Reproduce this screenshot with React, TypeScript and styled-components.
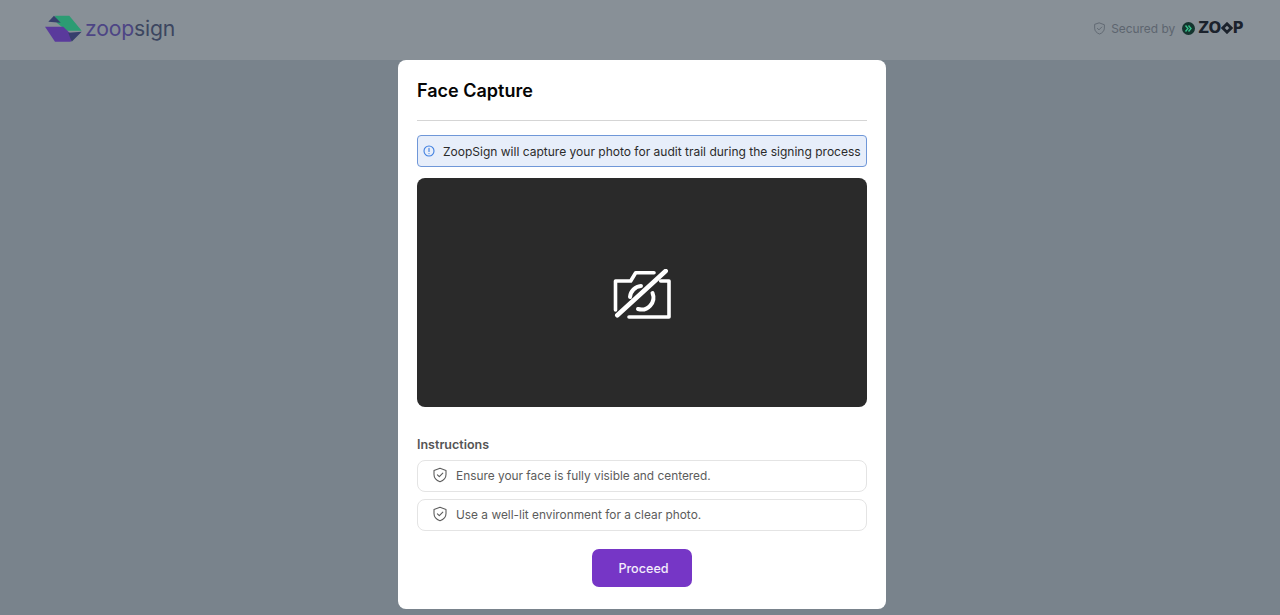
import styled, { createGlobalStyle } from "styled-components";

const GlobalStyle = createGlobalStyle`
  html, body {
    margin: 0;
    padding: 0;
    height: 100%;
  }
  body {
    font-family: Inter, "Noto Sans", sans-serif;
    overflow: hidden;
  }
`;

const Page = styled.div`
  width: 1280px;
  height: 615px;
  display: flex;
  flex-direction: column;
  background: #79838c;
`;

const Header = styled.header`
  height: 60px;
  flex: none;
  display: flex;
  align-items: center;
  justify-content: space-between;
  padding: 0 37px 4px 45px;
  box-sizing: border-box;
  background: #889097;
`;

const Logo = styled.div`
  display: flex;
  align-items: center;
  gap: 3px;
`;

const LogoWord = styled.span`
  font-size: 21.2px;
  line-height: 26px;
  letter-spacing: -0.2px;
  color: #4d4585;
`;

const LogoSign = styled.span`
  color: #3c4660;
`;

const Secured = styled.div`
  display: flex;
  align-items: center;
  gap: 5px;
  font-size: 11.9px;
  color: #5d656f;
`;

const ZoopMark = styled.div`
  display: flex;
  align-items: center;
  gap: 0;
  margin-left: 2px;
  font-family: "DejaVu Sans", sans-serif;
  font-weight: 700;
  font-size: 15px;
  letter-spacing: -0.6px;
  color: #1b222c;
`;

const ZoopBadgeSlot = styled.span`
  display: flex;
  margin-right: 3px;
`;

const Main = styled.main`
  flex: 1;
  display: flex;
  justify-content: center;
  align-items: flex-start;
  padding-left: 4px;
`;

const Card = styled.section`
  width: 488px;
  height: 549px;
  box-sizing: border-box;
  padding: 19px 19px 22px;
  display: flex;
  flex-direction: column;
  background: #fff;
  border-radius: 8px;
`;

const Title = styled.h1`
  margin: 0;
  height: 41px;
  border-bottom: 1px solid #d5d5d5;
  font-size: 18px;
  font-weight: 600;
  line-height: 24px;
  color: #050505;
`;

const InfoBox = styled.div`
  margin-top: 14px;
  height: 32px;
  box-sizing: border-box;
  display: flex;
  align-items: center;
  gap: 8px;
  padding-left: 5px;
  background: #e7eefa;
  border: 1px solid #6f97d8;
  border-radius: 4px;
  font-size: 12.03px;
  color: #2b2b2b;
  white-space: nowrap;
`;

const Camera = styled.div`
  margin-top: 11px;
  height: 229px;
  display: flex;
  align-items: center;
  justify-content: center;
  background: #2a2a2a;
  border-radius: 8px;
`;

const CameraIconSlot = styled.span`
  display: flex;
  margin-top: 2px;
`;

const SectionLabel = styled.h2`
  margin: 30px 0 0;
  font-size: 12.5px;
  font-weight: 600;
  line-height: 16px;
  color: #555;
`;

const RuleList = styled.div`
  margin-top: 7px;
  display: flex;
  flex-direction: column;
  gap: 7px;
`;

const Rule = styled.div`
  height: 32px;
  box-sizing: border-box;
  display: flex;
  align-items: center;
  gap: 8px;
  padding: 0 0 2px 14px;
  border: 1px solid #e4e4e4;
  border-radius: 8px;
  font-size: 11.88px;
  color: #5c5c5c;
`;

const ProceedButton = styled.button`
  align-self: center;
  margin-top: 18px;
  width: 100px;
  height: 38px;
  padding: 0 0 0 3px;
  border: 0;
  border-radius: 7px;
  background: #7636c6;
  color: #f3ecfb;
  font-family: inherit;
  font-size: 12.6px;
  font-weight: 500;
`;

const LogoIcon = () => (
  <svg width="37" height="27" viewBox="0 0 37 27">
    <path d="M10 0.7 H24.3 L36.7 15.7 H21.7 L11.7 7.7 Z" fill="#2c9c73" />
    <path d="M3.3 6.7 L9 0.7 L15.7 7.7 Z" fill="#363f6c" />
    <path d="M0 11.7 H18.3 L27.7 20.7 L25.7 26.7 H10 Z" fill="#5a3a9c" />
    <path d="M23.3 17.7 L36.7 16.7 L26.7 26.7 Z" fill="#363f6c" />
  </svg>
);

const ShieldCheck = ({ size, color }: { size: number; color: string }) => (
  <svg width={size} height={size} viewBox="0 0 16 16" fill="none" stroke={color} strokeWidth="1.1" strokeLinecap="round" strokeLinejoin="round">
    <path d="M8 1.2 L14 3.4 V7.6 C14 11 11.4 13.6 8 14.8 C4.6 13.6 2 11 2 7.6 V3.4 Z" />
    <path d="M5.4 7.8 L7.3 9.7 L10.8 6.2" />
  </svg>
);

const InfoIcon = () => (
  <svg width="12" height="12" viewBox="0 0 12 12" fill="none" stroke="#3f7fe0" strokeWidth="1.1" strokeLinecap="round">
    <circle cx="6" cy="6" r="5" />
    <path d="M6 3.2 V6.4 M6 8.5 V8.6" />
  </svg>
);

const CameraOff = () => (
  <svg width="58" height="50" viewBox="0 0 58 50" fill="none" stroke="#fff" strokeWidth="3.6" strokeLinecap="round" strokeLinejoin="round">
    <path d="M2.5 41 V12 H17.7 L22.7 3.7 H41" />
    <path d="M47.7 12 H56 V48 H16" />
    <path d="M17 28 A12 12 0 0 1 28 17" strokeWidth="4" />
    <path d="M39.5 24 A12 12 0 0 1 25 40" strokeWidth="4" />
    <path d="M4.3 46.3 L52.7 2" strokeWidth="4.6" />
  </svg>
);

const ZoopBadge = () => (
  <svg width="13" height="13" viewBox="0 0 13 13">
    <circle cx="6.5" cy="6.5" r="6.5" fill="#14342e" />
    <path d="M3.5 3.5 L6 6.5 L3.5 9.5 M6.5 3.5 L9 6.5 L6.5 9.5" fill="none" stroke="#35c08a" strokeWidth="1.4" />
  </svg>
);

const ZoopDiamond = () => (
  <svg width="12" height="12" viewBox="0 0 12 12" fill="none" stroke="#1b222c" strokeWidth="2.8">
    <path d="M6 1.8 L10.2 6 L6 10.2 L1.8 6 Z" />
  </svg>
);

export default function App() {
  return (
    <Page>
      <GlobalStyle />
      <Header>
        <Logo>
          <LogoIcon />
          <LogoWord>
            zoop<LogoSign>sign</LogoSign>
          </LogoWord>
        </Logo>
        <Secured>
          <ShieldCheck size={13} color="#5d656f" />
          Secured by
          <ZoopMark>
            <ZoopBadgeSlot>
              <ZoopBadge />
            </ZoopBadgeSlot>
            ZO
            <ZoopDiamond />
            P
          </ZoopMark>
        </Secured>
      </Header>
      <Main>
        <Card>
          <Title>Face Capture</Title>
          <InfoBox>
            <InfoIcon />
            ZoopSign will capture your photo for audit trail during the signing process
          </InfoBox>
          <Camera>
            <CameraIconSlot>
              <CameraOff />
            </CameraIconSlot>
          </Camera>
          <SectionLabel>Instructions</SectionLabel>
          <RuleList>
            <Rule>
              <ShieldCheck size={16} color="#5c5c5c" />
              Ensure your face is fully visible and centered.
            </Rule>
            <Rule>
              <ShieldCheck size={16} color="#5c5c5c" />
              Use a well-lit environment for a clear photo.
            </Rule>
          </RuleList>
          <ProceedButton>Proceed</ProceedButton>
        </Card>
      </Main>
    </Page>
  );
}
